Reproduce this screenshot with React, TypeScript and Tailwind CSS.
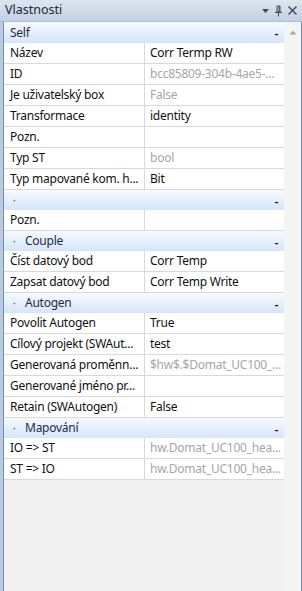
import React from 'react';

type Row =
  | { kind: 'header'; title: string; bullet?: boolean; first?: boolean }
  | { kind: 'row'; label: string; value?: string; muted?: boolean };

const rows: Row[] = [
  { kind: 'header', title: 'Self', first: true },
  { kind: 'row', label: 'Název', value: 'Corr Termp RW' },
  { kind: 'row', label: 'ID', value: 'bcc85809-304b-4ae5-...', muted: true },
  { kind: 'row', label: 'Je uživatelský box', value: 'False', muted: true },
  { kind: 'row', label: 'Transformace', value: 'identity' },
  { kind: 'row', label: 'Pozn.' },
  { kind: 'row', label: 'Typ ST', value: 'bool', muted: true },
  { kind: 'row', label: 'Typ mapované kom. h...', value: 'Bit' },
  { kind: 'header', title: '', bullet: true },
  { kind: 'row', label: 'Pozn.' },
  { kind: 'header', title: 'Couple', bullet: true },
  { kind: 'row', label: 'Číst datový bod', value: 'Corr Temp' },
  { kind: 'row', label: 'Zapsat datový bod', value: 'Corr Temp Write' },
  { kind: 'header', title: 'Autogen', bullet: true },
  { kind: 'row', label: 'Povolit Autogen', value: 'True' },
  { kind: 'row', label: 'Cílový projekt (SWAut...', value: 'test' },
  { kind: 'row', label: 'Generovaná proměnn...', value: '$hw$.$Domat_UC100_...', muted: true },
  { kind: 'row', label: 'Generované jméno pr...' },
  { kind: 'row', label: 'Retain (SWAutogen)', value: 'False' },
  { kind: 'header', title: 'Mapování', bullet: true },
  { kind: 'row', label: 'IO => ST', value: 'hw.Domat_UC100_hea...', muted: true },
  { kind: 'row', label: 'ST => IO', value: 'hw.Domat_UC100_hea...', muted: true },
];

function TitleIcons() {
  return (
    <div className="flex items-center gap-[4px] text-[#3b4657]">
      <svg width="9" height="9" viewBox="0 0 9 9">
        <path d="M1 3 H8 L4.5 7 Z" fill="currentColor" />
      </svg>
      <svg width="9" height="12" viewBox="0 0 9 12">
        <path d="M3 1 H6 V7 H3 Z" fill="none" stroke="currentColor" strokeWidth="1" />
        <path d="M5 1.5 V7" stroke="currentColor" strokeWidth="1" />
        <path d="M1 7.5 H8" stroke="currentColor" strokeWidth="1" />
        <path d="M4.5 8 V11.5" stroke="currentColor" strokeWidth="1" />
      </svg>
      <svg width="11" height="11" viewBox="0 0 11 11">
        <path d="M1.5 1.5 L9.5 9.5 M9.5 1.5 L1.5 9.5" stroke="currentColor" strokeWidth="1.4" />
      </svg>
    </div>
  );
}

export default function App() {
  return (
    <div className="w-[302px] h-[591px] flex flex-col bg-[#bccadf] font-['Noto_Sans',sans-serif] text-[12px] tracking-[-0.25px] leading-none overflow-hidden">
      {/* Title bar */}
      <div className="h-[22px] shrink-0 flex items-center justify-between pl-[5px] pr-[4px] bg-gradient-to-b from-[#dde5f0] to-[#c2d0e3] border-b border-[#aebdd3]">
        <span className="text-[#1c2533] text-[12.5px] tracking-normal">Vlastnosti</span>
        <TitleIcons />
      </div>

      <div className="flex-1 flex ml-[3px] border-l border-r border-[#6d8bb8] bg-[#f0f0f0]">
        {/* Grid */}
        <div className="w-[280px] flex flex-col">
          {rows.map((r, i) =>
            r.kind === 'header' ? (
              <div
                key={i}
                className={`${r.first ? 'h-[21px]' : 'h-[20px]'} flex items-center justify-between pr-[6px] bg-gradient-to-b from-[#f7fafe] to-[#d5e5f8] text-[#1b2c47]`}
              >
                <div className="flex items-center">
                  {r.bullet ? (
                    <>
                      <span className="w-[21px] pl-[9px] text-[10px] text-[#333]">·</span>
                      <span>{r.title}</span>
                    </>
                  ) : (
                    <span className="pl-[6px]">{r.title}</span>
                  )}
                </div>
                <span className="text-[#111] font-bold text-[11px]">-</span>
              </div>
            ) : (
              <div key={i} className="h-[21px] flex bg-white border-b border-[#d9d9d9]">
                <div className="w-[141px] shrink-0 flex items-center pl-[6px] border-r border-[#d9d9d9] text-[#111] whitespace-nowrap overflow-hidden">
                  {r.label}
                </div>
                <div
                  className={`flex-1 flex items-center pl-[5px] whitespace-nowrap overflow-hidden ${
                    r.muted ? 'text-[#a6a6a6]' : 'text-[#111]'
                  }`}
                >
                  {r.value ?? ''}
                </div>
              </div>
            )
          )}
        </div>

        {/* Scrollbar track */}
        <div className="flex-1 bg-[#f4f4f4] flex flex-col items-center pt-[8px]">
          <svg width="8" height="5" viewBox="0 0 8 5">
            <path d="M0.5 4.5 L4 0.5 L7.5 4.5 Z" fill="#a8a8a8" />
          </svg>
        </div>
      </div>
    </div>
  );
}
